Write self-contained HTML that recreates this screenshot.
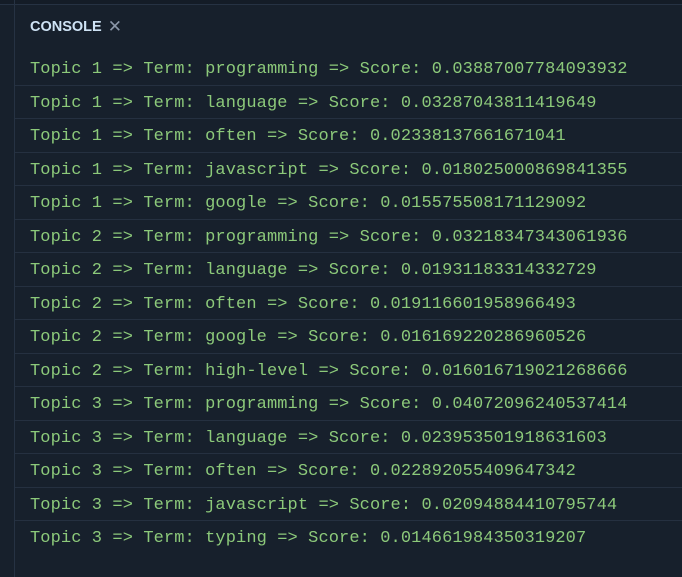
<!DOCTYPE html>
<html><head><style>
html,body{margin:0;padding:0;width:682px;height:577px;overflow:hidden;background:#17202c;}
.top{position:absolute;left:0;top:0;width:682px;height:4px;background:#141c27;border-bottom:1px solid #263243;}
.lb{position:absolute;left:14px;top:0;width:1px;height:577px;background:#263243;}
.hdr{position:absolute;left:30px;top:16px;font:bold 14.5px "Liberation Sans",sans-serif;color:#cfe3f5;}
.hdr span{color:#8a96a8;font-weight:normal;font-size:17px;margin-left:6px;position:relative;top:1px;}
.rows{position:absolute;left:15px;top:52px;width:667px;}
.r{height:32.5px;border-bottom:1px solid #253040;padding-left:15px;font:17px/32.5px "Liberation Mono",monospace;color:#8cc97a;letter-spacing:0.1px;white-space:pre;}
.r span{position:relative;top:2px;}
.r:last-child{border-bottom:none;}
</style></head><body>
<div class="top"></div><div class="lb"></div>
<div class="hdr">CONSOLE<span>✕</span></div>
<div class="rows">
<div class="r"><span>Topic 1 =&gt; Term: programming =&gt; Score: 0.03887007784093932</span></div>
<div class="r"><span>Topic 1 =&gt; Term: language =&gt; Score: 0.03287043811419649</span></div>
<div class="r"><span>Topic 1 =&gt; Term: often =&gt; Score: 0.02338137661671041</span></div>
<div class="r"><span>Topic 1 =&gt; Term: javascript =&gt; Score: 0.018025000869841355</span></div>
<div class="r"><span>Topic 1 =&gt; Term: google =&gt; Score: 0.015575508171129092</span></div>
<div class="r"><span>Topic 2 =&gt; Term: programming =&gt; Score: 0.03218347343061936</span></div>
<div class="r"><span>Topic 2 =&gt; Term: language =&gt; Score: 0.01931183314332729</span></div>
<div class="r"><span>Topic 2 =&gt; Term: often =&gt; Score: 0.019116601958966493</span></div>
<div class="r"><span>Topic 2 =&gt; Term: google =&gt; Score: 0.016169220286960526</span></div>
<div class="r"><span>Topic 2 =&gt; Term: high-level =&gt; Score: 0.016016719021268666</span></div>
<div class="r"><span>Topic 3 =&gt; Term: programming =&gt; Score: 0.04072096240537414</span></div>
<div class="r"><span>Topic 3 =&gt; Term: language =&gt; Score: 0.023953501918631603</span></div>
<div class="r"><span>Topic 3 =&gt; Term: often =&gt; Score: 0.022892055409647342</span></div>
<div class="r"><span>Topic 3 =&gt; Term: javascript =&gt; Score: 0.02094884410795744</span></div>
<div class="r"><span>Topic 3 =&gt; Term: typing =&gt; Score: 0.014661984350319207</span></div>
</div>
</body></html>
